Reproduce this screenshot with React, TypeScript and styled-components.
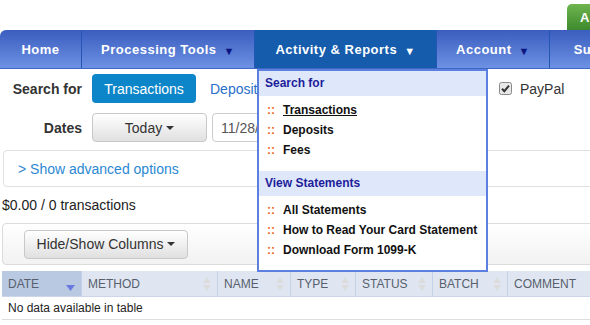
import React from 'react';
import styled, { createGlobalStyle } from 'styled-components';

const GlobalStyle = createGlobalStyle`
  html, body {
    margin: 0;
    padding: 0;
    background: #fff;
    overflow: hidden;
  }
  body {
    font-family: "Liberation Sans", Arial, sans-serif;
    color: #333;
  }
`;

const navItems = [
  { label: 'Home', width: 82, arrow: false },
  { label: 'Processing Tools', width: 173, arrow: true },
  { label: 'Activity & Reports', width: 182, arrow: true, active: true },
  { label: 'Account', width: 113, arrow: true },
  { label: 'Support', width: 120, arrow: true },
];

const columns = [
  { label: 'DATE', width: 80, sorted: true },
  { label: 'METHOD', width: 136 },
  { label: 'NAME', width: 73 },
  { label: 'TYPE', width: 65 },
  { label: 'STATUS', width: 77 },
  { label: 'BATCH', width: 75 },
  { label: 'COMMENT', width: 160 },
];

const SortIcon = () => (
  <svg width="8" height="14" viewBox="0 0 8 14">
    <path d="M4 0 L8 6 L0 6 Z" fill="#dcdcdc" />
    <path d="M0 8 L8 8 L4 14 Z" fill="#dcdcdc" />
  </svg>
);

const SortDesc = () => (
  <svg width="9" height="6" viewBox="0 0 9 6">
    <path d="M0 0 L9 0 L4.5 6 Z" fill="#6a7ae0" />
  </svg>
);

const Check = () => (
  <svg width="13" height="13" viewBox="0 0 13 13">
    <rect x="0.5" y="0.5" width="12" height="12" rx="2" fill="#e8e8e8" stroke="#8a8a8a" />
    <path d="M3 6.8 L5.3 9.2 L10 3.6" fill="none" stroke="#333" strokeWidth="2" />
  </svg>
);

const App: React.FC = () => {
  return (
    <Page>
      <GlobalStyle />
      <TopStrip>
        <GreenButton>Access Manager</GreenButton>
      </TopStrip>
      <Nav>
        {navItems.map((item, i) => (
          <NavItem key={item.label} $width={item.width} $active={!!item.active} $first={i === 0}>
            {item.label}
            {item.arrow && <NavArrow $active={!!item.active}>▼</NavArrow>}
            {item.active && (
              <Menu>
                <MenuHeader>Search for</MenuHeader>
                <MenuList>
                  <MenuItem $underline>Transactions</MenuItem>
                  <MenuItem>Deposits</MenuItem>
                  <MenuItem>Fees</MenuItem>
                </MenuList>
                <MenuHeader>View Statements</MenuHeader>
                <MenuList>
                  <MenuItem>All Statements</MenuItem>
                  <MenuItem>How to Read Your Card Statement</MenuItem>
                  <MenuItem>Download Form 1099-K</MenuItem>
                </MenuList>
              </Menu>
            )}
          </NavItem>
        ))}
      </Nav>
      <Content>
        <FormRow>
          <Label>Search for</Label>
          <Tabs>
            <PrimaryButton>Transactions</PrimaryButton>
            <TabLink>Deposits</TabLink>
            <TabLink>Fees</TabLink>
          </Tabs>
          <CheckLabel>
            <Check />
            PayPal
          </CheckLabel>
        </FormRow>
        <FormRow>
          <Label>Dates</Label>
          <SelectButton $width={115}>
            Today <Caret />
          </SelectButton>
          <DateInput>11/28/2017</DateInput>
        </FormRow>
        <AdvancedBox>
          <AdvancedLink>&gt; Show advanced options</AdvancedLink>
        </AdvancedBox>
        <Summary>$0.00 / 0 transactions</Summary>
        <Toolbar>
          <SelectButton $width={164}>
            Hide/Show Columns <Caret />
          </SelectButton>
        </Toolbar>
        <Table>
          <HeadRow>
            {columns.map((c) => (
              <HeadCell key={c.label} $width={c.width} $sorted={!!c.sorted}>
                {c.label}
                {c.sorted ? (
                  <SortDown>
                    <SortDesc />
                  </SortDown>
                ) : (
                  <SortIcon />
                )}
              </HeadCell>
            ))}
          </HeadRow>
          <EmptyRow>No data available in table</EmptyRow>
        </Table>
      </Content>
    </Page>
  );
};

const Page = styled.div`
  width: 820px;
`;

const TopStrip = styled.div`
  height: 30px;
  display: flex;
  align-items: flex-end;
  padding-left: 567px;
`;

const GreenButton = styled.div`
  height: 26px;
  padding: 0 13px;
  display: flex;
  align-items: center;
  background: linear-gradient(#6eb54e, #3d8a2e);
  border-radius: 5px 5px 0 0;
  color: #fff;
  font-weight: bold;
  font-size: 13px;
  letter-spacing: 0.5px;
  white-space: nowrap;
`;

const Nav = styled.div`
  display: flex;
  height: 38px;
  background: linear-gradient(#3a5dbf, #6d91e3);
  border-bottom: 1px solid #3e68c4;
  border-radius: 6px 0 0 0;
`;

const NavItem = styled.div<{ $width: number; $active: boolean; $first: boolean }>`
  position: relative;
  flex: 0 0 ${(p) => p.$width}px;
  display: flex;
  align-items: center;
  justify-content: center;
  box-sizing: border-box;
  border-right: 1px solid #2456b4;
  background: ${(p) => (p.$active ? '#155cad' : 'transparent')};
  border-radius: ${(p) => (p.$first ? '6px 0 0 0' : '0')};
  color: #fff;
  font-weight: bold;
  font-size: 13px;
  letter-spacing: 0.5px;
  white-space: nowrap;
`;

const NavArrow = styled.span<{ $active: boolean }>`
  margin-left: 7px;
  margin-top: 3px;
  font-size: 11px;
  color: ${(p) => (p.$active ? '#fff' : '#0b1580')};
`;

const Menu = styled.div`
  position: absolute;
  top: 39px;
  left: 2px;
  width: 231px;
  box-sizing: border-box;
  background: #fff;
  border: 2px solid #5c80e0;
  padding-bottom: 10px;
  letter-spacing: 0;
  z-index: 10;
`;

const MenuHeader = styled.div`
  height: 25px;
  line-height: 25px;
  padding-left: 6px;
  background: #dfe7fa;
  color: #1d1d9a;
  font-size: 12px;
  font-weight: bold;
`;

const MenuList = styled.div`
  padding: 4px 0 11px;

  &:last-child {
    padding-bottom: 0;
  }
`;

const MenuItem = styled.div<{ $underline?: boolean }>`
  height: 20px;
  line-height: 20px;
  padding-left: 8px;
  color: #111;
  font-size: 12px;
  font-weight: bold;

  &::before {
    content: '::';
    display: inline-block;
    width: 16px;
    color: #f26522;
  }

  text-decoration: ${(p) => (p.$underline ? 'underline' : 'none')};
`;

const Content = styled.div`
  padding: 5px 0 0 0;
`;

const FormRow = styled.div`
  display: flex;
  align-items: center;
  height: 29px;
  margin-bottom: 10px;
`;

const Label = styled.div`
  width: 82px;
  text-align: right;
  padding-right: 10px;
  font-weight: bold;
  font-size: 14px;
  color: #333;
`;

const Tabs = styled.div`
  display: flex;
  align-items: center;
  width: 407px;
`;

const PrimaryButton = styled.div`
  width: 104px;
  height: 29px;
  box-sizing: border-box;
  display: flex;
  align-items: center;
  justify-content: center;
  background: #0d86c9;
  border-radius: 4px;
  color: #fff;
  font-size: 14px;
`;

const TabLink = styled.div`
  padding: 0 14px;
  color: #2a6fc9;
  font-size: 14px;
`;

const CheckLabel = styled.div`
  display: flex;
  align-items: center;
  gap: 8px;
  font-size: 14px;
  color: #333;
`;

const SelectButton = styled.div<{ $width: number }>`
  width: ${(p) => p.$width}px;
  height: 29px;
  box-sizing: border-box;
  display: flex;
  align-items: center;
  justify-content: center;
  gap: 4px;
  background: linear-gradient(#fff, #e0e0e0);
  border: 1px solid #c8c8c8;
  border-radius: 4px;
  font-size: 14px;
  color: #333;
`;

const Caret = styled.span`
  display: inline-block;
  width: 0;
  height: 0;
  border-left: 4px solid transparent;
  border-right: 4px solid transparent;
  border-top: 4px solid #333;
`;

const DateInput = styled.div`
  margin-left: 5px;
  width: 120px;
  height: 29px;
  box-sizing: border-box;
  display: flex;
  align-items: center;
  padding-left: 8px;
  border: 1px solid #ccc;
  border-radius: 4px;
  font-size: 14px;
  color: #555;
`;

const AdvancedBox = styled.div`
  margin: -2px 0 0 3px;
  width: 780px;
  height: 37px;
  box-sizing: border-box;
  display: flex;
  align-items: center;
  padding-left: 14px;
  border: 1px solid #e0e0e0;
  border-radius: 4px;
`;

const AdvancedLink = styled.div`
  color: #2c88d2;
  font-size: 14px;
`;

const Summary = styled.div`
  height: 36px;
  line-height: 36px;
  padding-left: 2px;
  font-size: 14px;
  color: #222;
`;

const Toolbar = styled.div`
  margin-left: 2px;
  width: 780px;
  height: 42px;
  box-sizing: border-box;
  display: flex;
  align-items: center;
  padding-left: 21px;
  background: linear-gradient(#fff, #f2f2f2);
  border: 1px solid #dcdcdc;
  border-radius: 4px;
`;

const Table = styled.div`
  margin: 6px 0 0 2px;
  width: 780px;
`;

const HeadRow = styled.div`
  display: flex;
  height: 25px;
  background: #dfe6f2;
  border-bottom: 1px solid #cbd6e8;
`;

const HeadCell = styled.div<{ $width: number; $sorted: boolean }>`
  flex: 0 0 ${(p) => p.$width}px;
  box-sizing: border-box;
  display: flex;
  align-items: center;
  justify-content: space-between;
  padding: 0 6px;
  border-right: 1px solid #c4d2e8;
  background: ${(p) => (p.$sorted ? '#b9c9e2' : 'transparent')};
  color: #57606c;
  font-size: 12px;
`;

const SortDown = styled.span`
  display: flex;
  margin-top: 9px;
`;

const EmptyRow = styled.div`
  height: 22px;
  line-height: 22px;
  padding-left: 6px;
  border-bottom: 1px solid #ddd;
  font-size: 12px;
  color: #222;
`;

export default App;
